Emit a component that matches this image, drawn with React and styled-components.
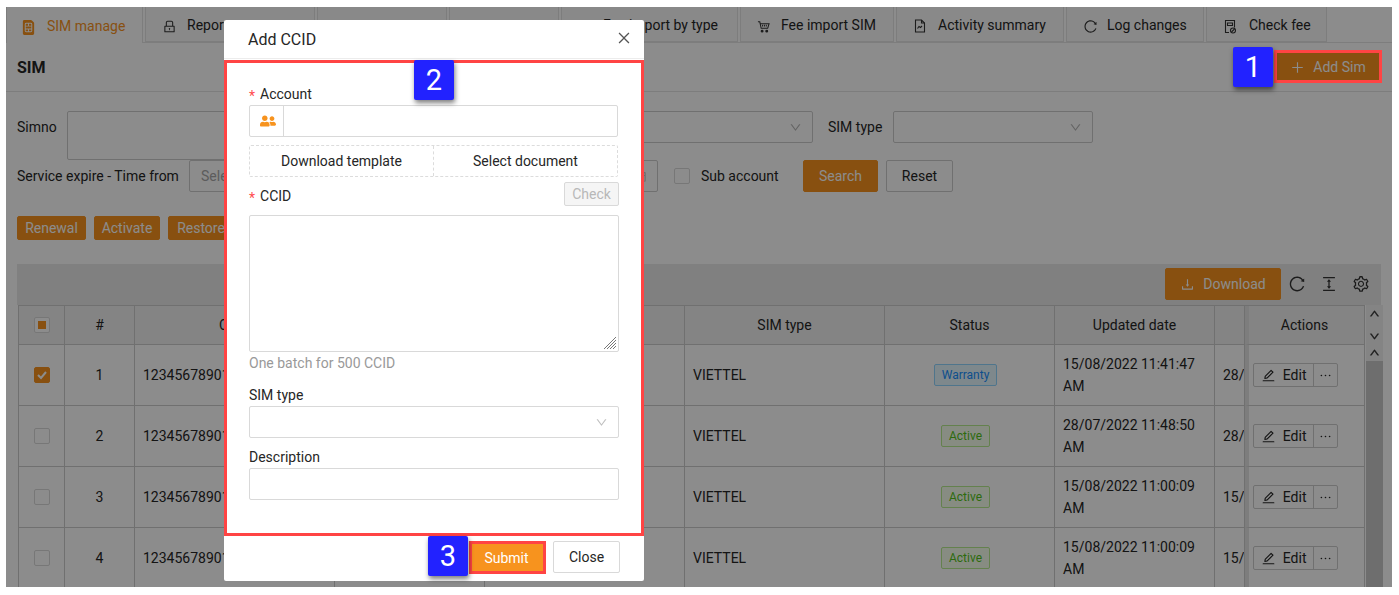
import React from 'react';
import styled, { createGlobalStyle } from 'styled-components';
import {
  AiOutlineCalendar,
  AiOutlineClose,
  AiOutlineColumnHeight,
  AiOutlineDown,
  AiOutlineDownload,
  AiOutlineEdit,
  AiOutlineEllipsis,
  AiOutlineLock,
  AiOutlinePlus,
  AiOutlineReload,
  AiOutlineSetting,
  AiOutlineUp,
} from 'react-icons/ai';
import { BsSimFill } from 'react-icons/bs';
import { FaUserFriends } from 'react-icons/fa';

const ORANGE = '#f7931e';
const LINE = '#cdcdcd';
const TEXT = '#262626';

const GlobalStyle = createGlobalStyle`
  html, body {
    margin: 0;
    background: #fff;
  }
  body {
    font-family: Roboto, "Liberation Sans", sans-serif;
    font-size: 14px;
    color: ${TEXT};
  }
  * {
    box-sizing: border-box;
  }
`;

const Page = styled.div`
  width: 1399px;
  height: 595px;
  padding: 7px 7px 8px 6px;
  overflow: hidden;
`;

const Frame = styled.div`
  position: relative;
  height: 580px;
  overflow: hidden;
  background: #fff;
`;

const TabBar = styled.div`
  display: flex;
  gap: 2px;
  height: 36px;
  border-bottom: 1px solid #e4e4e4;
`;

const Tab = styled.div`
  display: flex;
  align-items: center;
  flex: none;
  width: ${({ $width }) => $width}px;
  height: ${({ $active }) => ($active ? 36 : 35)}px;
  padding: 2px 0 0 16px;
  background: ${({ $active }) => ($active ? '#fff' : '#fafafa')};
  border: 1px solid #e4e4e4;
  border-bottom: ${({ $active }) => ($active ? 'none' : '1px solid #e4e4e4')};
  border-top: none;
  color: ${({ $active }) => ($active ? ORANGE : TEXT)};
  white-space: nowrap;
`;

const TabIcon = styled.span`
  display: flex;
  align-items: center;
  flex: none;
  width: ${({ $width }) => $width || 25}px;
  padding-top: 2px;
  font-size: 15px;
  color: ${({ $active }) => ($active ? ORANGE : '#333')};
  svg {
    margin-left: ${({ $active }) => ($active ? -2 : 0)}px;
  }
`;

const TitleRow = styled.div`
  display: flex;
  align-items: center;
  justify-content: space-between;
  height: 49px;
  padding: 0 11px;
  border-bottom: 1px solid #e4e4e4;
`;

const Title = styled.div`
  font-size: 16px;
  font-weight: 700;
`;

const Button = styled.div`
  display: flex;
  align-items: center;
  justify-content: center;
  flex: none;
  gap: 8px;
  width: ${({ $width }) => $width}px;
  height: ${({ $height }) => $height || 32}px;
  margin-left: ${({ $left }) => $left || 0}px;
  background: ${({ $plain }) => ($plain ? '#fff' : ORANGE)};
  border: 1px solid ${({ $plain }) => ($plain ? LINE : ORANGE)};
  border-radius: 2px;
  color: ${({ $plain }) => ($plain ? TEXT : '#fff')};
  svg {
    font-size: 15px;
  }
`;

const Filters = styled.div`
  display: flex;
  flex-direction: column;
  padding: 19px 11px 0;
`;

const FilterRow = styled.div`
  display: flex;
  align-items: ${({ $top }) => ($top ? 'flex-start' : 'center')};
`;

const FilterLabel = styled.div`
  flex: none;
  width: ${({ $width }) => $width}px;
  margin-left: ${({ $left }) => $left || 0}px;
  line-height: ${({ $top }) => ($top ? '32px' : '20px')};
  white-space: nowrap;
`;

const Field = styled.div`
  display: flex;
  align-items: center;
  justify-content: space-between;
  flex: none;
  width: ${({ $width }) => $width}px;
  height: ${({ $height }) => $height || 32}px;
  margin-left: ${({ $left }) => $left || 0}px;
  padding: 0 10px 0 11px;
  background: #fff;
  border: 1px solid ${LINE};
  border-radius: 2px;
  color: #a8a8a8;
  svg {
    font-size: 13px;
    color: #b5b5b5;
  }
`;

const Check = styled.div`
  display: flex;
  align-items: center;
  justify-content: center;
  flex: none;
  width: 16px;
  height: 16px;
  margin-left: ${({ $left }) => $left || 0}px;
  background: ${({ $on }) => ($on ? ORANGE : '#fff')};
  border: 1px solid ${({ $on }) => ($on ? ORANGE : '#d9d9d9')};
  border-radius: 2px;
`;

const CheckDot = styled.span`
  width: 8px;
  height: 8px;
  background: ${ORANGE};
`;

const SubAccount = styled.div`
  width: 102px;
  margin-left: 11px;
`;

const ActionRow = styled.div`
  display: flex;
  gap: 8px;
  margin: 24px 11px;
`;

const Toolbar = styled.div`
  display: flex;
  align-items: center;
  justify-content: flex-end;
  height: 41px;
  margin: 0 11px;
  padding: 0 4px 1px 0;
  background: #e9e9e9;
`;

const ToolIcon = styled.span`
  display: flex;
  justify-content: center;
  width: 32px;
  font-size: 18px;
  color: #333;
`;

const TableWrap = styled.div`
  display: flex;
  margin: 0 11px;
`;

const Table = styled.table`
  flex: none;
  width: 1346px;
  margin-left: 1px;
  border-collapse: separate;
  border-spacing: 0;
  table-layout: fixed;
  background: #fff;
  border-top: 1px solid ${LINE};
  border-left: 1px solid ${LINE};
`;

const Th = styled.th`
  height: 39px;
  padding: 0 8px;
  background: #f1f1f1;
  border-right: 1px solid ${LINE};
  border-bottom: 1px solid ${LINE};
  font-weight: 400;
  text-align: center;
  overflow: hidden;
  white-space: nowrap;
`;

const Td = styled.td`
  height: 61px;
  padding: 0 8px;
  border-right: 1px solid ${LINE};
  border-bottom: 1px solid ${LINE};
  line-height: 22px;
  text-align: ${({ $center }) => ($center ? 'center' : 'left')};
  overflow: hidden;
  white-space: ${({ $wrap }) => ($wrap ? 'normal' : 'nowrap')};
`;

const CheckCell = styled.div`
  display: flex;
  justify-content: center;
`;

const Tag = styled.span`
  display: inline-block;
  height: 22px;
  margin-right: 8px;
  padding: 0 7px;
  background: ${({ $blue }) => ($blue ? '#e6f7ff' : '#f6ffed')};
  border: 1px solid ${({ $blue }) => ($blue ? '#91d5ff' : '#b7eb8f')};
  border-radius: 2px;
  color: ${({ $blue }) => ($blue ? '#1890ff' : '#52c41a')};
  font-size: 12px;
  line-height: 20px;
  vertical-align: top;
`;

const EditGroup = styled.div`
  display: flex;
  width: 85px;
  height: 24px;
  background: #fff;
  border: 1px solid ${LINE};
  border-radius: 2px;
`;

const EditPart = styled.div`
  display: flex;
  align-items: center;
  justify-content: center;
  gap: 7px;
  width: ${({ $width }) => $width}px;
  border-right: ${({ $end }) => ($end ? 'none' : `1px solid ${LINE}`)};
  svg {
    font-size: 15px;
  }
`;

const ActionsTd = styled(Td)`
  border-left: 4px solid #e4e4e4;
  padding: 0 0 0 4px;
`;

const ActionsTh = styled(Th)`
  border-left: 4px solid #e4e4e4;
  padding: 0 12px 0 8px;
`;

const Scrollbar = styled.div`
  display: flex;
  flex-direction: column;
  flex: none;
  width: 17px;
  margin-left: 1px;
`;

const ScrollHead = styled.div`
  display: flex;
  flex-direction: column;
  align-items: center;
  justify-content: space-between;
  height: 40px;
  padding: 3px 0;
  background: #f1f1f1;
  font-size: 11px;
  color: #333;
  svg {
    stroke: currentColor;
    stroke-width: 50;
  }
`;

const ScrollUp = styled.div`
  display: flex;
  justify-content: center;
  height: 16px;
  padding-top: 2px;
  background: #f1f1f1;
  font-size: 11px;
  color: #333;
  svg {
    stroke: currentColor;
    stroke-width: 50;
  }
`;

const ScrollTrack = styled.div`
  flex: 1;
  background: #c9c9c9;
`;

const Overlay = styled.div`
  position: absolute;
  inset: 0;
  background: rgba(0, 0, 0, 0.45);
`;

const Modal = styled.div`
  position: absolute;
  top: 13px;
  left: 218px;
  display: flex;
  flex-direction: column;
  width: 420px;
  height: 561px;
  background: #fff;
  border-radius: 2px;
`;

const ModalHead = styled.div`
  display: flex;
  align-items: center;
  justify-content: space-between;
  flex: none;
  height: 39px;
  padding: 0 12px 0 24px;
  border-bottom: 1px solid #ececec;
  font-size: 16px;
  svg {
    margin-bottom: 2px;
    font-size: 16px;
    color: #555;
  }
`;

const ModalBody = styled.div`
  flex: none;
  height: 476px;
  margin-top: 1px;
  padding: 21px 22px 0;
  border: 3px solid #ff4444;
`;

const Label = styled.div`
  display: flex;
  align-items: center;
  justify-content: space-between;
  height: 20px;
  margin-top: ${({ $top }) => $top || 0}px;
`;

const Star = styled.span`
  margin-right: 5px;
  color: #ff4d4f;
  line-height: 0;
  vertical-align: -2px;
`;

const InputGroup = styled.div`
  display: flex;
  width: 369px;
  height: 32px;
  margin-top: 1px;
  border: 1px solid #d9d9d9;
  border-radius: 2px;
`;

const Addon = styled.div`
  display: flex;
  align-items: center;
  justify-content: center;
  width: 34px;
  padding-left: 3px;
  border-right: 1px solid #d9d9d9;
  font-size: 16px;
  color: ${ORANGE};
`;

const DashedGroup = styled.div`
  display: flex;
  width: 369px;
  height: 32px;
  margin-top: 8px;
  border: 1px dashed #dcdcdc;
  border-radius: 2px;
`;

const DashedPart = styled.div`
  display: flex;
  align-items: center;
  justify-content: center;
  flex: 1;
  border-left: ${({ $split }) => ($split ? '1px dashed #dcdcdc' : 'none')};
`;

const CcidRow = styled.div`
  display: flex;
  align-items: flex-end;
  justify-content: space-between;
  height: 24px;
  margin-top: 5px;
  line-height: 20px;
`;

const CheckButton = styled.div`
  display: flex;
  align-items: center;
  justify-content: center;
  width: 55px;
  height: 24px;
  background: #f5f5f5;
  border: 1px solid #d9d9d9;
  border-radius: 2px;
  color: #b8b8b8;
`;

const TextBox = styled.div`
  position: relative;
  height: 137px;
  margin-top: 9px;
  border: 1px solid #d9d9d9;
  border-radius: 2px;
`;

const Grip = styled.svg`
  position: absolute;
  right: 1px;
  bottom: 1px;
  width: 15px;
  height: 15px;
`;

const Hint = styled.div`
  height: 20px;
  margin-top: 1px;
  color: #999;
  line-height: 20px;
`;

const FormInput = styled.div`
  display: flex;
  align-items: center;
  justify-content: flex-end;
  height: 32px;
  margin-top: 1px;
  padding-right: 10px;
  border: 1px solid #d9d9d9;
  border-radius: 2px;
  svg {
    font-size: 13px;
    color: #bfbfbf;
  }
`;

const ModalFoot = styled.div`
  display: flex;
  justify-content: flex-end;
  gap: 7px;
  padding: 5px 24px 0 0;
`;

const SubmitButton = styled.div`
  display: flex;
  align-items: center;
  justify-content: center;
  width: 77px;
  height: 33px;
  padding-right: 2px;
  background: ${ORANGE};
  border: 3px solid #ff4444;
  color: #fff;
`;

const CloseButton = styled.div`
  display: flex;
  align-items: center;
  justify-content: center;
  width: 67px;
  height: 32px;
  border: 1px solid #d9d9d9;
  border-radius: 2px;
`;

// annotations painted on top of the screenshot
const Badge = styled.div`
  position: absolute;
  top: ${({ $top }) => $top}px;
  left: ${({ $left }) => $left}px;
  display: flex;
  align-items: center;
  justify-content: center;
  width: 40px;
  height: 40px;
  background: #2222ff;
  border-radius: 2px;
  box-shadow: 1px 3px 5px rgba(0, 0, 0, 0.5);
  color: #fff;
  font-size: 29px;
  line-height: 1;
`;

const Highlight = styled.div`
  position: absolute;
  top: 43px;
  left: 1268px;
  width: 108px;
  height: 33px;
  border: 3px solid #ff4444;
`;

const CartIcon = () => (
  <svg width="13" height="13" viewBox="0 0 14 14" fill="none" stroke="#333" strokeWidth="1.1">
    <path d="M1 2h2l1.5 7h7L13 4H3.5" />
    <path d="M6 5v2M8 5v2M10 5v2" />
    <circle cx="5.5" cy="12" r="1" fill="#333" />
    <circle cx="10.5" cy="12" r="1" fill="#333" />
  </svg>
);

const DocIcon = () => (
  <svg width="14" height="14" viewBox="0 0 14 14" fill="none" stroke="#333" strokeWidth="1.1">
    <path d="M2.5 1h6l3 3v9h-9z" />
    <path d="M8.5 1v3h3" />
    <path d="M4.5 9.5l1.5-2 1.5 1 1.5-1.5" />
  </svg>
);

const FeeIcon = () => (
  <svg width="14" height="15" viewBox="0 0 14 15" fill="none" stroke="#333" strokeWidth="1.1">
    <path d="M6 13.5H2.5v-12h9v7" />
    <path d="M4.5 4h5v2.5h-5z" />
    <circle cx="10" cy="11.5" r="2.5" />
    <path d="M8.5 13l3-3" />
  </svg>
);

const tabs = [
  { width: 137, label: 'SIM manage', icon: <BsSimFill />, iconWidth: 24, active: true },
  { width: 170, label: 'Report', icon: <AiOutlineLock /> },
  { width: 130 },
  { width: 110 },
  { width: 177, label: 'Fee import by type', icon: <CartIcon /> },
  { width: 154, label: 'Fee import SIM', icon: <CartIcon />, iconWidth: 24 },
  { width: 168, label: 'Activity summary', icon: <DocIcon /> },
  { width: 138, label: 'Log changes', icon: <AiOutlineReload />, iconWidth: 24 },
  { width: 121, label: 'Check fee', icon: <FeeIcon />, iconWidth: 26 },
];

const rows = [
  { id: 1, checked: true, status: 'Warranty', updated: '15/08/2022 11:41:47 AM', next: '28/' },
  { id: 2, status: 'Active', updated: '28/07/2022 11:48:50 AM', next: '28/' },
  { id: 3, status: 'Active', updated: '15/08/2022 11:00:09 AM', next: '15/' },
  { id: 4, status: 'Active', updated: '15/08/2022 11:00:09 AM', next: '15/' },
];

const columns = [46, 70, 200, 150, 200, 200, 170, 160, 30, 120];

const App = () => (
  <Page>
    <GlobalStyle />
    <Frame>
      <TabBar>
        {tabs.map((tab, i) => (
          <Tab key={i} $width={tab.width} $active={tab.active}>
            {tab.icon && (
              <TabIcon $active={tab.active} $width={tab.iconWidth}>
                {tab.icon}
              </TabIcon>
            )}
            {tab.label}
          </Tab>
        ))}
      </TabBar>

      <TitleRow>
        <Title>SIM</Title>
        <Button $width={106}>
          <AiOutlinePlus />
          Add Sim
        </Button>
      </TitleRow>

      <Filters>
        <FilterRow $top>
          <FilterLabel $width={50} $top>Simno</FilterLabel>
          <Field $width={333} $height={49} />
          <Field $width={363} $left={50}>
            <span />
            <AiOutlineDown />
          </Field>
          <FilterLabel $width={65} $left={15} $top>SIM type</FilterLabel>
          <Field $width={200}>
            <span />
            <AiOutlineDown />
          </Field>
        </FilterRow>
        <FilterRow>
          <FilterLabel $width={172}>Service expire - Time from</FilterLabel>
          <Field $width={469}>
            Select date
            <AiOutlineCalendar />
          </Field>
          <Check $left={16} />
          <SubAccount>Sub account</SubAccount>
          <Button $width={75}>Search</Button>
          <Button $width={67} $left={8} $plain>Reset</Button>
        </FilterRow>
      </Filters>

      <ActionRow>
        <Button $width={69} $height={24}>Renewal</Button>
        <Button $width={66} $height={24}>Activate</Button>
        <Button $width={66} $height={24}>Restore</Button>
      </ActionRow>

      <Toolbar>
        <Button $width={116}>
          <AiOutlineDownload />
          Download
        </Button>
        <ToolIcon><AiOutlineReload /></ToolIcon>
        <ToolIcon><AiOutlineColumnHeight /></ToolIcon>
        <ToolIcon><AiOutlineSetting /></ToolIcon>
      </Toolbar>

      <TableWrap>
        <Table>
          <colgroup>
            {columns.map((w, i) => (
              <col key={i} width={w} />
            ))}
          </colgroup>
          <thead>
            <tr>
              <Th>
                <CheckCell>
                  <Check><CheckDot /></Check>
                </CheckCell>
              </Th>
              <Th>#</Th>
              <Th>CCID</Th>
              <Th />
              <Th />
              <Th>SIM type</Th>
              <Th>Status</Th>
              <Th>Updated date</Th>
              <Th />
              <ActionsTh>Actions</ActionsTh>
            </tr>
          </thead>
          <tbody>
            {rows.map((row) => (
              <tr key={row.id}>
                <Td>
                  <CheckCell>
                    <Check $on={row.checked}>
                      {row.checked && (
                        <svg width="12" height="12" viewBox="0 0 12 12" fill="none" stroke="#fff" strokeWidth="2">
                          <path d="M2 6l3 3 5-6" />
                        </svg>
                      )}
                    </Check>
                  </CheckCell>
                </Td>
                <Td $center>{row.id}</Td>
                <Td>12345678901234567890</Td>
                <Td />
                <Td />
                <Td>VIETTEL</Td>
                <Td $center>
                  <Tag $blue={row.status === 'Warranty'}>{row.status}</Tag>
                </Td>
                <Td $wrap>{row.updated}</Td>
                <Td>{row.next}</Td>
                <ActionsTd>
                  <EditGroup>
                    <EditPart $width={61}>
                      <AiOutlineEdit />
                      Edit
                    </EditPart>
                    <EditPart $width={23} $end>
                      <AiOutlineEllipsis />
                    </EditPart>
                  </EditGroup>
                </ActionsTd>
              </tr>
            ))}
          </tbody>
        </Table>
        <Scrollbar>
          <ScrollHead>
            <AiOutlineUp />
            <AiOutlineDown />
          </ScrollHead>
          <ScrollUp><AiOutlineUp /></ScrollUp>
          <ScrollTrack />
        </Scrollbar>
      </TableWrap>

      <Overlay />

      <Modal>
        <ModalHead>
          Add CCID
          <AiOutlineClose />
        </ModalHead>
        <ModalBody>
          <Label>
            <span><Star>*</Star>Account</span>
          </Label>
          <InputGroup>
            <Addon><FaUserFriends /></Addon>
          </InputGroup>
          <DashedGroup>
            <DashedPart>Download template</DashedPart>
            <DashedPart $split>Select document</DashedPart>
          </DashedGroup>
          <CcidRow>
            <span><Star>*</Star>CCID</span>
            <CheckButton>Check</CheckButton>
          </CcidRow>
          <TextBox>
            <Grip viewBox="0 0 15 15" stroke="#777" strokeWidth="1">
              <path d="M2 14L14 2M5 14L14 5M8 14l6-6M11 14l3-3" />
            </Grip>
          </TextBox>
          <Hint>One batch for 500 CCID</Hint>
          <Label $top={12}>SIM type</Label>
          <FormInput><AiOutlineDown /></FormInput>
          <Label $top={9}>Description</Label>
          <FormInput />
        </ModalBody>
        <ModalFoot>
          <SubmitButton>Submit</SubmitButton>
          <CloseButton>Close</CloseButton>
        </ModalFoot>
      </Modal>

      <Highlight />
      <Badge $left={1227} $top={40}>1</Badge>
      <Badge $left={408} $top={53}>2</Badge>
      <Badge $left={422} $top={529}>3</Badge>
    </Frame>
  </Page>
);

export default App;
